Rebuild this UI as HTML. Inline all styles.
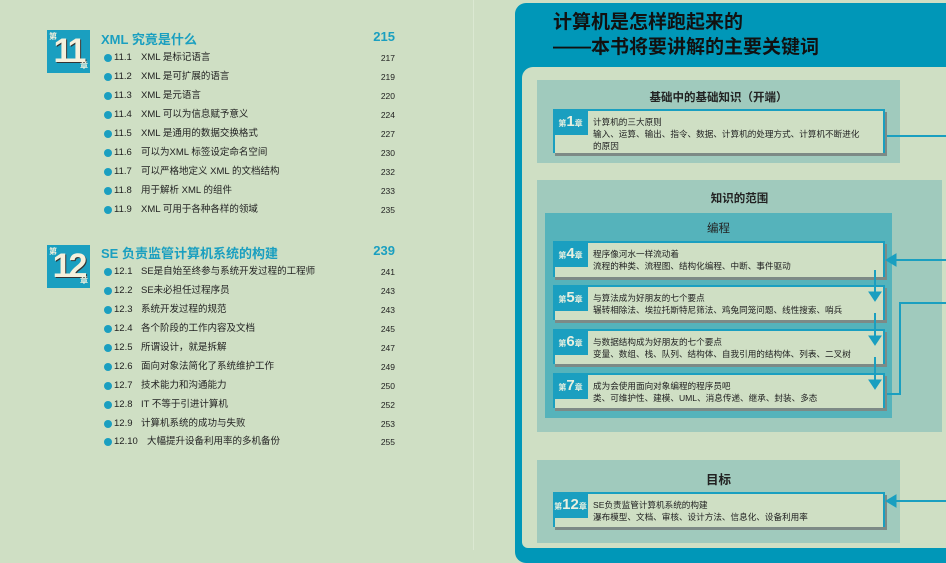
<!DOCTYPE html>
<html><head><meta charset="utf-8"><style>
*{margin:0;padding:0;box-sizing:border-box}
body{width:946px;height:550px;overflow:hidden;background:#cfdfc4;position:relative;font-family:"Liberation Sans","Noto Sans CJK SC",sans-serif;color:#222}
.a{position:absolute}
.badge{position:absolute;width:43px;height:43px;background:#1a9fc0;color:#f4f0dc;font-weight:bold;font-size:34px;letter-spacing:-3px;line-height:43px;text-align:center;text-shadow:1px 1px 0 #333}
.badge small{position:absolute;font-size:8px;letter-spacing:0;line-height:8px;text-shadow:none;color:#f4f0dc}
.ct{position:absolute;left:101px;font-size:13px;font-weight:bold;color:#1a9fc0;width:294px}
.ct span{position:absolute;right:0;top:0}
.row{position:absolute;left:104px;width:291px;font-size:9.5px;height:12px;line-height:12px}
.row i{position:absolute;left:0;top:2px;width:8px;height:8px;border-radius:50%;background:#1a9fc0}
.row b{position:absolute;left:10px;font-weight:normal}
.row em{position:absolute;left:37px;font-style:normal}
.row u{position:absolute;right:0;text-decoration:none;font-size:8.5px}
.sec{position:absolute;background:#a0cabd}
.sec h3{position:absolute;width:100%;text-align:center;font-size:11.5px;font-weight:bold;color:#222}
.card{position:absolute;left:553px;width:332px;background:#cfdfc4;border-top:2px solid #1a9fc0;border-left:2px solid #1a9fc0;border-right:2px solid #1a9fc0;box-shadow:2px 3px 0 #7d8a86;font-size:8.6px;line-height:12px;padding:5px 0 0 38px}
.card .bd{position:absolute;left:-2px;top:-2px;width:35px;height:26px;background:#1a9fc0;color:#e8f0e0;font-weight:bold;font-size:8px;text-align:center;line-height:26px}
.card .bd big{font-size:15px}
</style></head><body>
<div class="a" style="left:473px;top:0;width:1px;height:550px;background:#dbe8d2"></div>

<div class="badge" style="left:47px;top:30px">11<small style="left:2px;top:3px">第</small><small style="right:2px;bottom:3px">章</small></div>
<div class="ct" style="top:29px">XML 究竟是什么<span>215</span></div>
<div class="row" style="top:52px"><i></i><b>11.1</b><em>XML 是标记语言</em><u>217</u></div>
<div class="row" style="top:71px"><i></i><b>11.2</b><em>XML 是可扩展的语言</em><u>219</u></div>
<div class="row" style="top:90px"><i></i><b>11.3</b><em>XML 是元语言</em><u>220</u></div>
<div class="row" style="top:109px"><i></i><b>11.4</b><em>XML 可以为信息赋予意义</em><u>224</u></div>
<div class="row" style="top:128px"><i></i><b>11.5</b><em>XML 是通用的数据交换格式</em><u>227</u></div>
<div class="row" style="top:147px"><i></i><b>11.6</b><em>可以为XML 标签设定命名空间</em><u>230</u></div>
<div class="row" style="top:166px"><i></i><b>11.7</b><em>可以严格地定义 XML 的文档结构</em><u>232</u></div>
<div class="row" style="top:185px"><i></i><b>11.8</b><em>用于解析 XML 的组件</em><u>233</u></div>
<div class="row" style="top:204px"><i></i><b>11.9</b><em>XML 可用于各种各样的领域</em><u>235</u></div>

<div class="badge" style="left:47px;top:245px">12<small style="left:2px;top:3px">第</small><small style="right:2px;bottom:3px">章</small></div>
<div class="ct" style="top:243px">SE 负责监管计算机系统的构建<span>239</span></div>
<div class="row" style="top:266px"><i></i><b>12.1</b><em>SE是自始至终参与系统开发过程的工程师</em><u>241</u></div>
<div class="row" style="top:285px"><i></i><b>12.2</b><em>SE未必担任过程序员</em><u>243</u></div>
<div class="row" style="top:304px"><i></i><b>12.3</b><em>系统开发过程的规范</em><u>243</u></div>
<div class="row" style="top:323px"><i></i><b>12.4</b><em>各个阶段的工作内容及文档</em><u>245</u></div>
<div class="row" style="top:342px"><i></i><b>12.5</b><em>所谓设计，就是拆解</em><u>247</u></div>
<div class="row" style="top:361px"><i></i><b>12.6</b><em>面向对象法简化了系统维护工作</em><u>249</u></div>
<div class="row" style="top:380px"><i></i><b>12.7</b><em>技术能力和沟通能力</em><u>250</u></div>
<div class="row" style="top:399px"><i></i><b>12.8</b><em>IT 不等于引进计算机</em><u>252</u></div>
<div class="row" style="top:418px"><i></i><b>12.9</b><em>计算机系统的成功与失败</em><u>253</u></div>
<div class="row" style="top:436px"><i></i><b>12.10</b><em style="left:43px">大幅提升设备利用率的多机备份</em><u>255</u></div>

<!-- right page -->
<div class="a" style="left:515px;top:3px;width:440px;height:560px;background:#0097b8;border-radius:11px 0 0 11px"></div>
<div class="a" style="left:553px;top:10px;font-size:19px;font-weight:bold;color:#111;line-height:25px">计算机是怎样跑起来的<br>——本书将要讲解的主要关键词</div>
<div class="a" style="left:522px;top:67px;width:430px;height:481px;background:#cfdfc4;border-radius:11px 0 0 6px"></div>

<div class="sec" style="left:537px;top:80px;width:363px;height:83px"><h3 style="top:9px">基础中的基础知识（开端）</h3></div>
<div class="card" style="top:109px;height:44px"><div class="bd">第<big>1</big>章</div>计算机的三大原则<br>输入、运算、输出、指令、数据、计算机的处理方式、计算机不断进化<br>的原因</div>

<div class="sec" style="left:537px;top:180px;width:405px;height:252px"><h3 style="top:10px">知识的范围</h3></div>
<div class="a" style="left:545px;top:213px;width:347px;height:205px;background:#55b3bb"></div>
<div class="a" style="left:545px;top:220px;width:347px;text-align:center;font-size:11.5px;color:#222">编程</div>
<div class="card" style="top:241px;height:36px"><div class="bd">第<big>4</big>章</div>程序像河水一样流动着<br>流程的种类、流程图、结构化编程、中断、事件驱动</div>
<div class="card" style="top:285px;height:35px"><div class="bd">第<big>5</big>章</div>与算法成为好朋友的七个要点<br>辗转相除法、埃拉托斯特尼筛法、鸡兔同笼问题、线性搜索、哨兵</div>
<div class="card" style="top:329px;height:35px"><div class="bd">第<big>6</big>章</div>与数据结构成为好朋友的七个要点<br>变量、数组、栈、队列、结构体、自我引用的结构体、列表、二叉树</div>
<div class="card" style="top:373px;height:35px"><div class="bd">第<big>7</big>章</div>成为会使用面向对象编程的程序员吧<br>类、可维护性、建模、UML、消息传递、继承、封装、多态</div>

<div class="sec" style="left:537px;top:460px;width:363px;height:83px"><h3 style="top:9px;font-size:12.5px">目标</h3></div>
<div class="card" style="top:492px;height:35px"><div class="bd">第<big>12</big>章</div>SE负责监管计算机系统的构建<br>瀑布模型、文档、审核、设计方法、信息化、设备利用率</div>

<svg class="a" style="left:0;top:0" width="946" height="550">
<g fill="#1a9fc0" stroke="#1a9fc0">
<line x1="887" y1="136" x2="946" y2="136" stroke-width="2"/>
<line x1="875" y1="270" x2="875" y2="292" stroke-width="2"/><polygon points="869,292 881,292 875,301"/>
<line x1="875" y1="313" x2="875" y2="336" stroke-width="2"/><polygon points="869,336 881,336 875,345"/>
<line x1="875" y1="357" x2="875" y2="380" stroke-width="2"/><polygon points="869,380 881,380 875,389"/>
<line x1="894" y1="260" x2="946" y2="260" stroke-width="2"/><polygon points="886,260 896,254 896,266"/>
<polyline points="887,394 900,394 900,303 946,303" fill="none" stroke-width="2"/>
<line x1="894" y1="501" x2="946" y2="501" stroke-width="2"/><polygon points="886,501 896,495 896,507"/>
</g></svg>
</body></html>
